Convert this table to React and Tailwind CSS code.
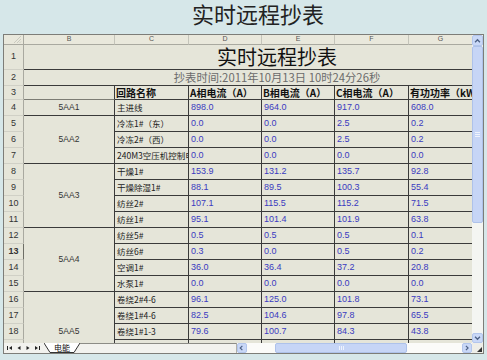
import React from "react";

const cjk = "font-['Noto_Sans_CJK_SC',sans-serif]";
const num = "font-['Liberation_Sans','Noto_Sans_CJK_SC',sans-serif]";

const spanCls = { 1: "", 3: "row-span-3", 4: "row-span-4", 5: "row-span-5" };

// [group, span, name, A, B, C, P]
const data = [
  ["5AA1", 1, "主进线", "898.0", "964.0", "917.0", "608.0"],
  ["5AA2", 3, "冷冻1#（东）", "0.0", "0.0", "2.5", "0.2"],
  [null, 0, "冷冻2#（西）", "0.0", "0.0", "2.5", "0.2"],
  [null, 0, "240M3空压机控制电源", "0.0", "0.0", "0.0", "0.0"],
  ["5AA3", 4, "干燥1#", "153.9", "131.2", "135.7", "92.8"],
  [null, 0, "干燥除湿1#", "88.1", "89.5", "100.3", "55.4"],
  [null, 0, "纺丝2#", "107.1", "115.5", "115.2", "71.5"],
  [null, 0, "纺丝1#", "95.1", "101.4", "101.9", "63.8"],
  ["5AA4", 4, "纺丝5#", "0.5", "0.5", "0.5", "0.1"],
  [null, 0, "纺丝6#", "0.3", "0.0", "0.5", "0.2"],
  [null, 0, "空调1#", "36.0", "36.4", "37.2", "20.8"],
  [null, 0, "水泵1#", "0.0", "0.0", "0.0", "0.0"],
  ["5AA5", 5, "卷绕2#4-6", "96.1", "125.0", "101.8", "73.1"],
  [null, 0, "卷绕1#4-6", "82.5", "104.6", "97.8", "65.5"],
  [null, 0, "卷绕1#1-3", "79.6", "100.7", "84.3", "43.8"],
  [null, 0, "卷绕2#1-3", "88.0", "97.1", "90.4", "51.2"],
  [null, 0, "", "", "", "", ""],
];

const rowHead = `${num} flex items-center justify-center text-[9px] text-[#333] border-r border-b border-[#a9a9a0] border-b-[#d0d0c6]`;
const cell = "flex items-center overflow-hidden whitespace-nowrap border-b border-[#3a3a3a]";

function Chevron({ dir }) {
  const d = {
    up: "M2.5 6.5 L5.5 3.5 L8.5 6.5",
    down: "M2.5 3.5 L5.5 6.5 L8.5 3.5",
    left: "M6 2 L3 5 L6 8",
    right: "M4 2 L7 5 L4 8",
  }[dir];
  return (
    <svg width="10" height="10" viewBox="0 0 11 10">
      <path d={d} fill="none" stroke="#4d6185" strokeWidth="1.6" />
    </svg>
  );
}

function NavBtn({ kind }) {
  return (
    <svg width="8" height="8" viewBox="0 0 8 8" className="shrink-0">
      {kind === "first" && <><rect x="1" y="2" width="1" height="4" fill="#222" /><path d="M6 2 L3 4 L6 6 Z" fill="#222" /></>}
      {kind === "prev" && <path d="M5.5 2 L2.5 4 L5.5 6 Z" fill="#222" />}
      {kind === "next" && <path d="M2.5 2 L5.5 4 L2.5 6 Z" fill="#222" />}
      {kind === "last" && <><path d="M2 2 L5 4 L2 6 Z" fill="#222" /><rect x="6" y="2" width="1" height="4" fill="#222" /></>}
    </svg>
  );
}

export default function App() {
  return (
    <div className="w-[487px] h-[360px] bg-[#d6e7e9] overflow-hidden">
      <div className={`${cjk} h-[34px] flex justify-center pl-[29px] pt-[2px] text-[22px] leading-none text-[#222]`}>
        实时远程抄表
      </div>

      <div className="ml-[3px] w-[481px] border border-[#7d7d78] bg-[#e5e5d9] flex flex-col">
        <div className="flex h-[308px]">
          {/* sheet grid */}
          <div className="w-[468px] h-[308px] overflow-hidden grid grid-cols-[20px_91px_74px_73px_73px_74px_63px] grid-rows-[10px_25px_16px_14px_repeat(17,16px)]">
            {/* column headers */}
            <div className="relative border-r border-b border-[#a9a9a0] bg-[#e9e8dc]">
              <svg width="10" height="9" viewBox="0 0 10 9" className="absolute right-[1px] bottom-0">
                <path d="M9 1 L2 8 M9 4 L5 8 M9 6.5 L7.5 8" stroke="#c2c2b8" strokeWidth="0.8" />
              </svg>
            </div>
            {["B", "C", "D", "E", "F", "G"].map((c, i) => (
              <div key={c} className={`${num} flex items-center justify-center text-[7px] text-[#555] bg-[#e9e8dc] border-b border-[#a9a9a0] ${i < 5 ? "border-r border-r-[#c4c4ba]" : ""}`}>
                {c}
              </div>
            ))}

            {/* row 1 */}
            <div className={rowHead}>1</div>
            <div className="col-span-6 flex items-center overflow-hidden border-b border-[#3a3a3a]">
              <div className={`${cjk} w-[506px] shrink-0 text-center text-[20px] leading-none text-[#111]`}>实时远程抄表</div>
            </div>

            {/* row 2 */}
            <div className={rowHead}>2</div>
            <div className="col-span-6 flex items-center overflow-hidden border-b border-[#3a3a3a]">
              <div className={`${cjk} w-[506px] shrink-0 text-center text-[11.3px] leading-none text-[#6b6b6b]`}>
                抄表时间:2011年10月13日 10时24分26秒
              </div>
            </div>

            {/* row 3 */}
            <div className={rowHead}>3</div>
            <div className="border-r border-[#3a3a3a] border-b border-b-[#7c7c74]" />
            {["回路名称", "A相电流（A）", "B相电流（A）", "C相电流（A）", "有功功率（kW）"].map((h, i) => (
              <div key={h} className={`${cell} ${cjk} ${i < 4 ? "border-r" : ""} pl-[1px] text-[10px] font-bold text-[#111]`}>
                {h}
              </div>
            ))}

            {/* data rows */}
            {data.map((r, idx) => {
              const n = idx + 4;
              const [group, span, name, ...vals] = r;
              return (
                <React.Fragment key={n}>
                  <div className={`${rowHead} ${n === 13 ? "font-bold text-[#111] border-r-[#6e6e66]" : ""}`}>{n}</div>
                  {group && (
                    <div className={`${spanCls[span]} ${num} flex items-center justify-center border-r border-b border-[#3a3a3a] text-[8.5px] text-[#333]`}>
                      {group}
                    </div>
                  )}
                  <div className={`${cell} ${cjk} border-r pl-[2px] text-[8.5px] text-[#222]`}>{name}</div>
                  {vals.map((v, i) => (
                    <div key={i} className={`${cell} ${num} ${i < 3 ? "border-r" : ""} pl-[2px] text-[9px] text-[#3a3ac0]`}>
                      {v}
                    </div>
                  ))}
                </React.Fragment>
              );
            })}
          </div>

          {/* vertical scrollbar */}
          <div className="w-[11px] h-[308px] flex flex-col bg-[#f4f5f2]">
            <div className="h-[11px] flex items-center justify-center bg-[#c9d8f7] border border-[#b3c6ec] rounded-[2px]">
              <Chevron dir="up" />
            </div>
            <div className="h-[177px] flex flex-col items-center justify-center gap-[1px] bg-[#c6d5f6] border border-[#aec2ea] rounded-[2px]">
              <div className="w-[5px] h-px bg-[#eef3fd]" />
              <div className="w-[5px] h-px bg-[#eef3fd]" />
              <div className="w-[5px] h-px bg-[#eef3fd]" />
            </div>
            <div className="flex-1" />
            <div className="h-[10px] flex items-center justify-center bg-[#c9d8f7] border border-[#b3c6ec] rounded-[2px]">
              <Chevron dir="down" />
            </div>
          </div>
        </div>

        {/* sheet tabs + horizontal scrollbar */}
        <div className="flex h-[10px] bg-[#f2f2ee]">
          <div className="w-[233px] flex items-stretch">
            <div className="flex items-center gap-[1px] pl-[2px] pr-[3px]">
              <NavBtn kind="first" />
              <NavBtn kind="prev" />
              <NavBtn kind="next" />
              <NavBtn kind="last" />
            </div>
            <div className="relative w-[36px] flex items-center justify-center">
              <svg width="36" height="10" viewBox="0 0 36 10" className="absolute inset-0">
                <polyline points="0,0 6,9.5 30,9.5 36,0" fill="#ffffff" stroke="#333" strokeWidth="1" />
              </svg>
              <span className={`${cjk} relative text-[8px] leading-none text-[#111]`}>电能</span>
            </div>
            <div className="flex-1 border-t border-[#8c8c86] border-r border-r-[#b0b0a8]" />
          </div>
          <div className="w-[235px] flex bg-[#fbfbf9]">
            <div className="w-[10px] flex items-center justify-center bg-[#c9d8f7] border border-[#b3c6ec] rounded-[2px]">
              <Chevron dir="left" />
            </div>
            <div className="ml-[28px] w-[132px] flex items-center justify-center gap-[1px] bg-[#c6d5f6] border border-[#aec2ea] rounded-[2px]">
              <div className="w-px h-[4px] bg-[#eef3fd]" />
              <div className="w-px h-[4px] bg-[#eef3fd]" />
              <div className="w-px h-[4px] bg-[#eef3fd]" />
            </div>
            <div className="flex-1" />
            <div className="w-[10px] flex items-center justify-center bg-[#c9d8f7] border border-[#b3c6ec] rounded-[2px]">
              <Chevron dir="right" />
            </div>
          </div>
          <div className="w-[11px] flex items-end justify-end bg-[#eeeee8]">
            <svg width="8" height="8" viewBox="0 0 8 8">
              <path d="M7 2 L7 7 L2 7 Z" fill="#333" />
            </svg>
          </div>
        </div>
      </div>
    </div>
  );
}
